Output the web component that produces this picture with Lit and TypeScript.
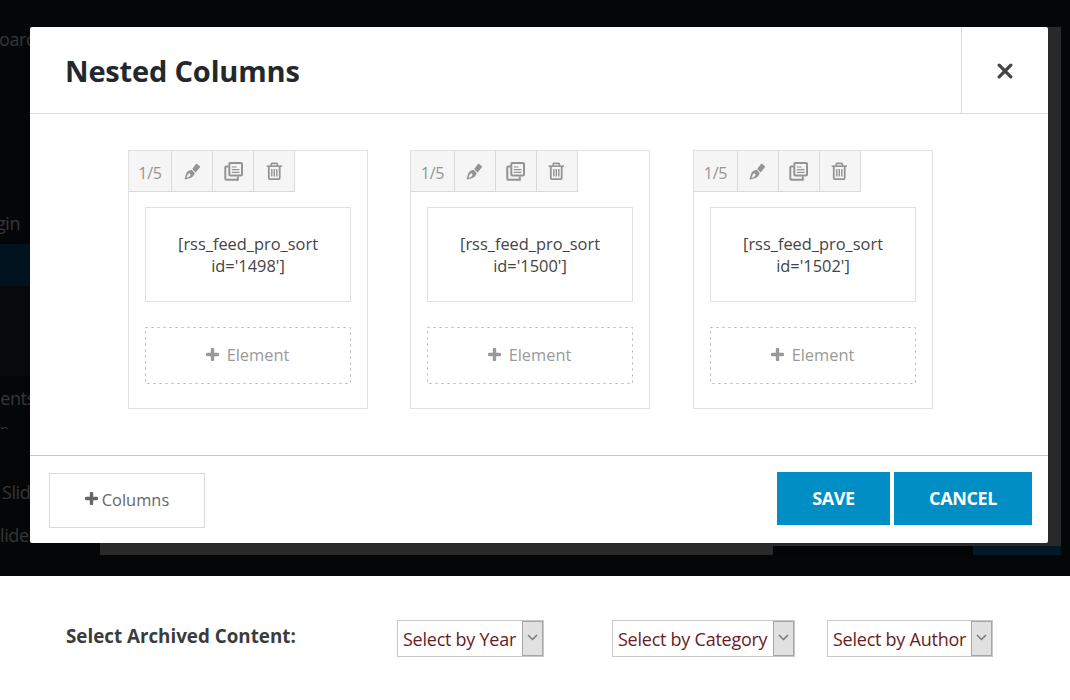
import { LitElement, html, css, svg } from "lit";
import { customElement, property } from "lit/decorators.js";

const penIcon = svg`<path d="M10.2 8L13.6 3.4Q14.3 2.5 15.2 3.1L17.6 5Q18.5 5.7 17.8 6.6L13.6 11.5Z" fill="currentColor"/>
  <path fill-rule="evenodd" fill="currentColor" d="M9.7 8.8L12.7 12Q11.6 16 8.5 17.1L3 18.4Q2.3 18.3 2.8 17.2L4.3 12.3Q5.6 9.4 9.7 8.8ZM4.6 16.8Q8.6 15.8 8.5 13.8Q8.2 11.9 6.7 12.4Q5.2 13 4.6 16.8Z"/>`;
const copyIcon = svg`<g fill="none" stroke="currentColor">
  <rect x="6.3" y="2" width="12.7" height="12.4" rx="1" stroke-width="2"/>
  <path d="M5.4 5.5H3.2Q2.3 5.5 2.3 6.4V17.7Q2.3 18.7 3.3 18.7H14.8V15.4" stroke-width="2"/>
  <path d="M8.8 6H13.5M8.8 8.7H16.5M8.8 11.4H16.5" stroke-width="1.2"/></g>`;
const trashIcon = svg`<g fill="none" stroke="currentColor">
  <path d="M2.7 5.2H18" stroke-width="1.6"/>
  <path d="M7.2 5V3.4Q7.2 2.4 8.2 2.4H12.4Q13.4 2.4 13.4 3.4V5" stroke-width="1.6"/>
  <path d="M4.8 5.5V16.9Q4.8 18.2 6.1 18.2H14.4Q15.7 18.2 15.7 16.9V5.5" stroke-width="1.8"/>
  <path d="M7.8 8V15.4M10.3 8V15.4M12.8 8V15.4" stroke-width="1.4"/></g>`;
const plusIcon = html`<svg class="plus" width="13" height="13" viewBox="0 0 13 13"><path d="M6.5 1.5V11.5M1.5 6.5H11.5" stroke="currentColor" stroke-width="3.4" stroke-linecap="round"/></svg>`;

@customElement("column-card")
class ColumnCard extends LitElement {
  @property({ type: Number }) feed = 0;
  static styles = css`
    :host { display: block; box-sizing: border-box; width: 240px; height: 259px; border: 1px solid #e1e1e1; font-size: 16.4px; }
    .tools { display: flex; height: 40px; width: max-content; background: #f5f5f5; color: #949494; border-bottom: 1px solid #d9d9d9; }
    .cell { width: 40px; border-right: 1px solid #d9d9d9; display: flex; align-items: center; justify-content: center; }
    .cell svg { margin-left: var(--icon-shift, 0); }
    .ratio { width: var(--ratio-width, 43px); font-size: 16px; letter-spacing: -0.3px; padding-top: 3px; box-sizing: border-box; }
    .text { box-sizing: border-box; margin: 15px 16px 25px; height: 95px; border: 1px solid #e1e1e1; padding-top: 25px; text-align: center; line-height: 22px; color: #444; }
    .add { margin: 0 16px; height: 57px; display: grid; color: #999; }
    .add > * { grid-area: 1 / 1; }
    .label { display: flex; align-items: center; justify-content: center; gap: 8px; height: 55px; }
    .label span { line-height: 22px; }
    .label .plus { margin-left: -1px; }
  `;
  render() {
    const icon = (i: unknown) => html`<div class="cell"><svg width="20" height="20" viewBox="0 0 20 20">${i}</svg></div>`;
    return html`
      <div class="tools"><div class="cell ratio">1/5</div>${icon(penIcon)}${icon(copyIcon)}${icon(trashIcon)}</div>
      <div class="text">[rss_feed_pro_sort<br />id='${this.feed}']</div>
      <div class="add">
        <svg width="206" height="57"><rect x=".5" y=".5" width="205" height="56" fill="none" stroke="#b0b0b0" stroke-dasharray="2 4"/></svg>
        <div class="label">${plusIcon}<span>Element</span></div>
      </div>`;
  }
}

@customElement("archive-select")
class ArchiveSelect extends LitElement {
  @property() label = "";
  static styles = css`
    :host { box-sizing: border-box; height: 37px; border: 1px solid #c8c8c8; display: flex; justify-content: space-between; background: #fff; color: #691c1e; font-size: 18px; letter-spacing: -0.25px; }
    .name { padding-left: 5px; line-height: 36px; white-space: nowrap; }
    .arrow { box-sizing: border-box; width: 21px; flex: none; border: 1px solid #a6a6a6; background: #e1e1e1; display: flex; align-items: center; justify-content: center; }
    .arrow svg { margin-top: -2px; }
  `;
  render() {
    return html`<span class="name">${this.label}</span>
      <span class="arrow"><svg width="11" height="7" viewBox="0 0 11 7"><path d="M1 1L5.5 5.6L10 1" fill="none" stroke="#777" stroke-width="1.4"/></svg></span>`;
  }
}

@customElement("app-root")
class AppRoot extends LitElement {
  static styles = css`
    :host { display: block; width: 1070px; height: 700px; overflow: hidden; background: #fff; font-family: "Open Sans", "Noto Sans", sans-serif; font-size: 16px; color: #444; }
    .stage { position: relative; height: 576px; background: #050608; display: grid; grid-template-columns: 100px 961px; overflow: hidden; }
    .side { overflow: hidden; color: #363636; font-size: 18px; letter-spacing: -0.4px; white-space: nowrap; padding-top: 15px; }
    .item { height: 48px; line-height: 48px; }
    .first { margin-bottom: 137px; margin-left: -1px; }
    .gin { height: 44px; line-height: 47px; margin-left: -4px; }
    .active { height: 42px; background: #00131f; }
    .sub { height: 90px; background: #08090a; }
    .ments { height: 44px; line-height: 44px; margin-left: -16px; }
    .cut { height: 9px; line-height: 18px; overflow: hidden; margin-bottom: 39px; font-size: 15px; }
    .slid { height: 43px; padding-left: 2px; }
    .board { margin-top: 27px; height: 528px; display: grid; grid-template: 519px 9px / 673px 200px 88px; }
    .canvas { grid-column: 1 / 4; background: #292929; }
    .strip { background: #292929; }
    .gap { background: #030405; }
    .publish { background: #021927; }
    .modal { position: absolute; left: 30px; top: 27px; width: 1018px; height: 516px; background: #fff; border-radius: 2px; display: flex; flex-direction: column; }
    header { height: 86px; display: flex; justify-content: space-between; border-bottom: 1px solid #d9d9d9; }
    h1 { margin: 0 0 0 35px; font-size: 29px; line-height: 88px; letter-spacing: -0.17px; font-weight: 700; color: #23282d; white-space: nowrap; }
    .close { width: 86px; border-left: 1px solid #d9d9d9; display: flex; align-items: center; justify-content: center; color: #444; }
    main { height: 341px; box-sizing: border-box; padding: 36px 0 0 98px; display: flex; gap: 42px; }
    .wide { --ratio-width: 44px; --icon-shift: -2px; }
    .last { margin-left: 1px; }
    footer { flex: 1; border-top: 1px solid #c8c8c8; padding: 16px 16px 0 19px; display: flex; align-items: flex-start; gap: 4px; }
    .columns { box-sizing: border-box; width: 156px; height: 55px; margin: 1px auto 0 0; border: 1px solid #d9d9d9; display: flex; align-items: center; justify-content: center; gap: 4px; padding-bottom: 2px; font-size: 16.4px; color: #666; }
    .columns .plus { margin-top: -2px; }
    .btn { height: 53px; line-height: 53px; text-align: center; background: #008ec5; color: #fff; font-size: 18px; font-weight: 700; letter-spacing: -0.4px; }
    .save { width: 113px; }
    .cancel { width: 138px; }
    .archive { display: flex; padding: 44px 0 0 66px; }
    .caption { width: 331px; font-size: 18.8px; line-height: 32px; font-weight: 700; color: #3b3b3b; }
    .close svg { margin: 1px 0 0 0.5px; }
    .year { width: 147px; margin-right: 68px; }
    .category { width: 183px; margin-right: 32px; }
    .author { width: 166px; }
  `;
  render() {
    return html`
      <section class="stage">
        <nav class="side">
          <div class="item first">oard</div>
          <div class="item gin">gin</div>
          <div class="active"></div>
          <div class="sub"></div>
          <div class="item ments">ments</div>
          <div class="cut">n</div>
          <div class="item slid">Slide</div>
          <div class="item">lider</div>
        </nav>
        <div class="board"><div class="canvas"></div><div class="strip"></div><div class="gap"></div><div class="publish"></div></div>
        <div class="modal">
          <header>
            <h1>Nested Columns</h1>
            <div class="close"><svg width="16" height="16" viewBox="0 0 16 16"><path d="M2.2 2.2L13.8 13.8M13.8 2.2L2.2 13.8" stroke="currentColor" stroke-width="3.3" stroke-linecap="round"/></svg></div>
          </header>
          <main>
            <column-card .feed=${1498}></column-card>
            <column-card class="wide" .feed=${1500}></column-card>
            <column-card class="wide last" .feed=${1502}></column-card>
          </main>
          <footer>
            <div class="columns">${plusIcon}<span>Columns</span></div>
            <div class="btn save">SAVE</div>
            <div class="btn cancel">CANCEL</div>
          </footer>
        </div>
      </section>
      <section class="archive">
        <div class="caption">Select Archived Content:</div>
        <archive-select class="year" label="Select by Year"></archive-select>
        <archive-select class="category" label="Select by Category"></archive-select>
        <archive-select class="author" label="Select by Author"></archive-select>
      </section>`;
  }
}
